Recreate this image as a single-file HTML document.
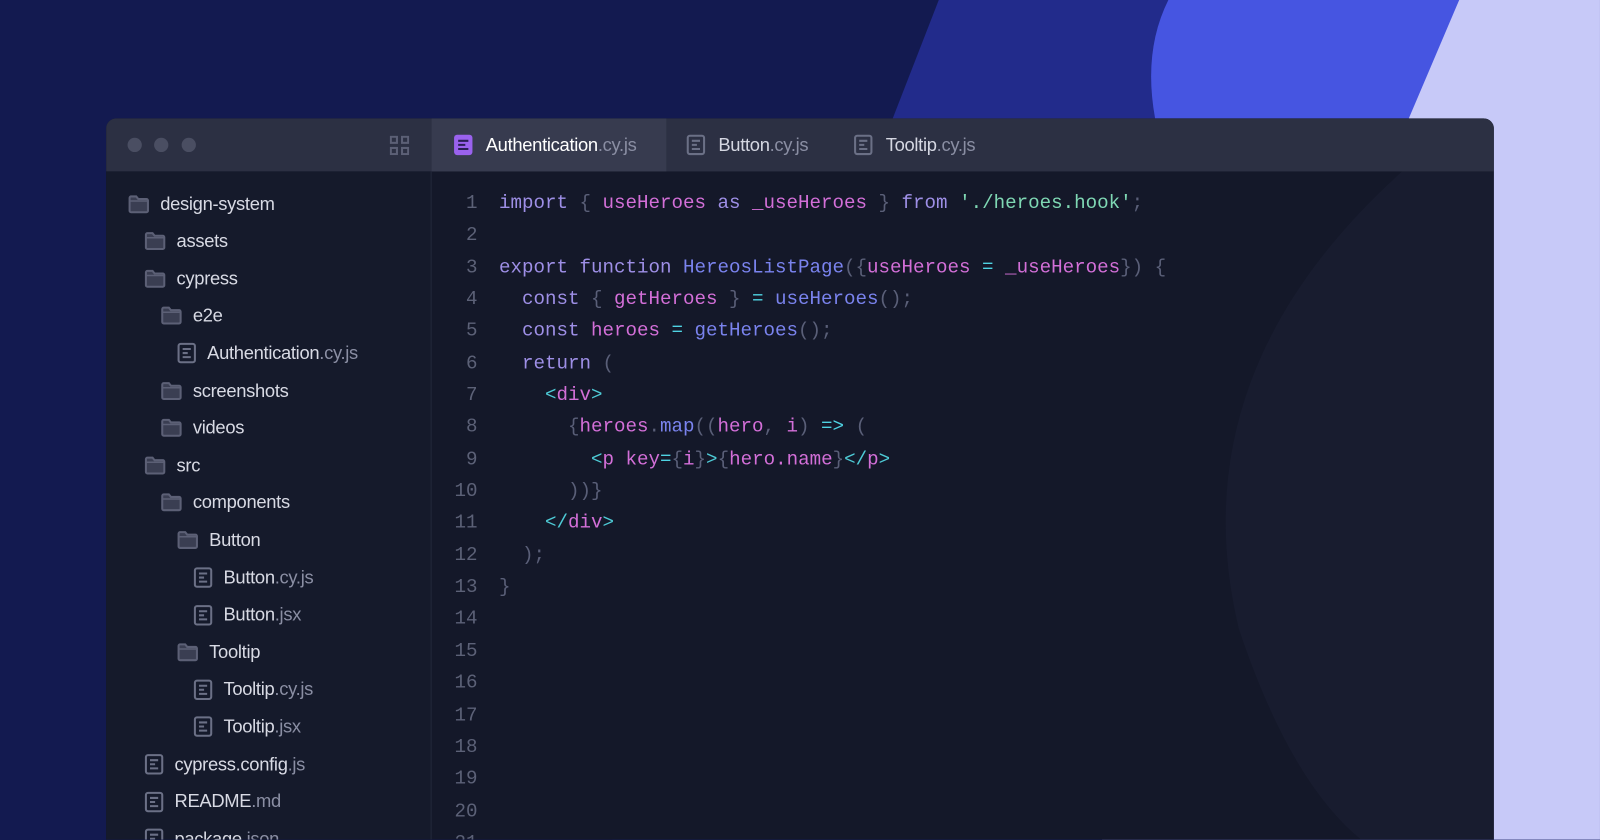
<!DOCTYPE html>
<html><head><meta charset="utf-8"><style>
*{margin:0;padding:0;box-sizing:border-box}
html,body{width:1600px;height:840px;overflow:hidden}
body{background:#131a50;position:relative;font-family:"Liberation Sans",sans-serif}
#s{position:absolute;left:0;top:0;width:1568px;height:823px;overflow:hidden;transform:scale(1.0204);transform-origin:0 0}
.bg{position:absolute;left:0;top:0}
.win{position:absolute;left:104px;top:116px;width:1360px;height:707px;border-radius:10px 10px 0 0;overflow:hidden;background:#141829}
.bar{position:absolute;left:0;top:0;width:1360px;height:52px;background:#2c3043}
.dot{position:absolute;top:19px;width:14px;height:14px;border-radius:50%;background:#4a4e62}
.side{position:absolute;left:0;top:52px;width:319px;height:655px;background:#151a2b;border-right:1px solid #23283a}
.tab{position:absolute;top:0;height:52px;display:flex;align-items:center;font-size:18px;color:#d5d7e2;letter-spacing:-0.3px}
.tab.act{background:#373b4f;color:#fff}
.tab svg{margin-right:12px}
.ext{color:#8a8ea3}
.row{position:absolute;height:30px;display:flex;align-items:center;font-size:18px;color:#d8dae4;letter-spacing:-0.3px}
.row svg{margin-right:10px}
.code{position:absolute;left:320px;top:68px;font-family:"Liberation Mono",monospace;font-size:18.8px;line-height:31.35px;white-space:pre;color:#5a5f78}
.ln{position:absolute;left:320px;top:68px;width:44px;text-align:right;font-family:"Liberation Mono",monospace;font-size:18.8px;line-height:31.35px;color:#5c6177;white-space:pre}
.k{color:#9e8fe6}.v{color:#d36fd8}.s{color:#7fd8b4}.f{color:#7a83ee}.o{color:#4fd3e3}.t{color:#4ecbd6}.p{color:#5a5f78}
</style></head><body>
<div id="s">
<svg class="bg" width="1568" height="823">
<path d="M920 0 L1568 0 L1568 823 L600 823 Z" fill="#222b8b"/>
<path d="M1145 0 L1430 0 L1385 116 L1132 116 Q1120 50 1145 0Z" fill="#4655e1"/>
<path d="M1430 0 L1568 0 L1568 823 L1080 823 Z" fill="#c7c9f8"/>
</svg>
<div class="win">
<svg style="position:absolute;left:0;top:0" width="1360" height="707"><path d="M1270 52 Q1050 250 1110 500 Q1160 650 1230 707 L1360 707 L1360 52Z" fill="#181c2f"/></svg>
<div class="bar"></div>
<div class="dot" style="left:21px"></div><div class="dot" style="left:47px"></div><div class="dot" style="left:74px"></div>
<svg style="position:absolute;left:278px;top:17px" width="19" height="19"><g fill="none" stroke="#5c6076" stroke-width="2"><rect x="1" y="1" width="6" height="6"/><rect x="12" y="1" width="6" height="6"/><rect x="1" y="12" width="6" height="6"/><rect x="12" y="12" width="6" height="6"/></g></svg>
<div class="tab act" style="left:319px;width:230px;padding-left:21px"><svg width="20" height="22"><rect x="1" y="1" width="18" height="20" rx="3" fill="#9a62ee"/><path d="M5 7h10M5 11h7M5 15h10" stroke="#2a1f55" stroke-width="2"/></svg>Authentication<span class="ext">.cy.js</span></div>
<div class="tab" style="left:568px"><svg width="20" height="22"><rect x="2" y="2" width="16" height="18" rx="2" fill="none" stroke="#6b7086" stroke-width="2"/><path d="M6 7h8M6 11h5M6 15h8" stroke="#6b7086" stroke-width="2"/></svg>Button<span class="ext">.cy.js</span></div>
<div class="tab" style="left:732px"><svg width="20" height="22"><rect x="2" y="2" width="16" height="18" rx="2" fill="none" stroke="#6b7086" stroke-width="2"/><path d="M6 7h8M6 11h5M6 15h8" stroke="#6b7086" stroke-width="2"/></svg>Tooltip<span class="ext">.cy.js</span></div>
<div class="side"></div>
<div id="tree"></div>
<div class="ln">1
2
3
4
5
6
7
8
9
10
11
12
13
14
15
16
17
18
19
20
21</div>
<div class="code" style="left:385px"><span class="k">import</span> { <span class="v">useHeroes</span> <span class="k">as</span> <span class="v">_useHeroes</span> } <span class="k">from</span> <span class="s">'./heroes.hook'</span>;

<span class="k">export function</span> <span class="f">HereosListPage</span>({<span class="v">useHeroes</span> <span class="o">=</span> <span class="v">_useHeroes</span>}) {
  <span class="k">const</span> { <span class="v">getHeroes</span> } <span class="o">=</span> <span class="f">useHeroes</span>();
  <span class="k">const</span> <span class="v">heroes</span> <span class="o">=</span> <span class="f">getHeroes</span>();
  <span class="k">return</span> (
    <span class="t">&lt;</span><span class="v">div</span><span class="t">&gt;</span>
      {<span class="v">heroes</span>.<span class="f">map</span>((<span class="v">hero</span>, <span class="v">i</span>) <span class="o">=&gt;</span> (
        <span class="t">&lt;</span><span class="v">p key</span><span class="o">=</span>{<span class="v">i</span>}<span class="t">&gt;</span>{<span class="v">hero.name</span>}<span class="t">&lt;/</span><span class="v">p</span><span class="t">&gt;</span>
      ))}
    <span class="t">&lt;/</span><span class="v">div</span><span class="t">&gt;</span>
  );
}</div>
</div>
</div>
<script>
const F='<svg width="22" height="19"><path d="M2 3a1.5 1.5 0 0 1 1.5-1.5h5l2 2.5h8a1.5 1.5 0 0 1 1.5 1.5v10a1.5 1.5 0 0 1-1.5 1.5h-15A1.5 1.5 0 0 1 2 15.5Z" fill="#3a3e52" stroke="#5c6076" stroke-width="2"/><path d="M2 6h18" stroke="#5c6076" stroke-width="1.5"/></svg>';
const D='<svg width="20" height="22"><rect x="2" y="2" width="16" height="18" rx="2" fill="none" stroke="#6b7086" stroke-width="2"/><path d="M6 7h8M6 11h5M6 15h8" stroke="#6b7086" stroke-width="2"/></svg>';
const items=[[0,F,'design-system',''],[1,F,'assets',''],[1,F,'cypress',''],[2,F,'e2e',''],[3,D,'Authentication','.cy.js'],[2,F,'screenshots',''],[2,F,'videos',''],[1,F,'src',''],[2,F,'components',''],[3,F,'Button',''],[4,D,'Button','.cy.js'],[4,D,'Button','.jsx'],[3,F,'Tooltip',''],[4,D,'Tooltip','.cy.js'],[4,D,'Tooltip','.jsx'],[1,D,'cypress.config','.js'],[1,D,'README','.md'],[1,D,'package','.json']];
let h='';items.forEach((it,i)=>{const y=84+i*36.6-15;h+=`<div class="row" style="left:${21+it[0]*16}px;top:${y}px">${it[1]}${it[2]}<span class="ext">${it[3]}</span></div>`});
document.getElementById('tree').outerHTML=h;
</script>
</body></html>
